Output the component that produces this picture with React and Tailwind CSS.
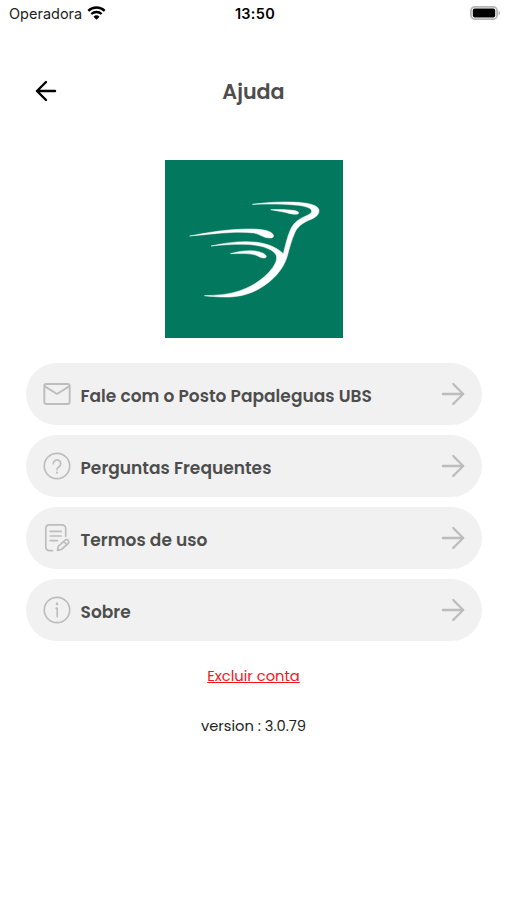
import React from "react";

const StatusBar = () => {
  return (
    <div className="grid h-7 grid-cols-3 items-center pl-[9px] pr-[6px] font-['Inter',sans-serif] text-[#222]">
      <div className="flex items-center">
        <span className="text-[14.5px]">Operadora</span>
        <svg className="mb-[2px] ml-[5px] h-[14px] w-[19px] shrink-0" viewBox="0 0 19 14" fill="none">
          <path d="M1.3 4.8a12 12 0 0 1 16.4 0" stroke="#000" strokeWidth="2.5" />
          <path d="M4.3 8a7.7 7.7 0 0 1 10.4 0" stroke="#000" strokeWidth="2.3" />
          <path d="M9.5 13.8 6.5 10.8a4.3 4.3 0 0 1 6 0Z" fill="#000" />
        </svg>
      </div>
      <span className="text-center text-[14.5px] font-semibold tracking-[0.3px] text-black">
        13:50
      </span>
      <svg className="mb-[2px] h-[14px] w-[31px] justify-self-end" viewBox="0 0 31 14">
        <rect x="0.9" y="0.9" width="26.2" height="12.2" rx="3.8" fill="#fff" stroke="#b5b5b5" strokeWidth="1.8" />
        <rect x="2.8" y="2.6" width="22.4" height="8.8" rx="1.8" fill="#000" />
        <path d="M28.5 5v4c1-.4 1.6-1.1 1.6-2s-.6-1.6-1.6-2Z" fill="#b5b5b5" />
      </svg>
    </div>
  );
};

const Logo = () => {
  return (
    <svg className="h-[178px] w-[178px]" viewBox="15 14 534 534">
      <rect x="15" y="14" width="534" height="534" fill="#02785f" />
      <g fill="#fff" stroke="#fff" strokeWidth="1.5" strokeLinejoin="round">
        <path d="M277 147C320 141 370 138 414 141C451 144 477 151 477 166C477 181 463 188 446 195C426 204 412 215 405 231C394 255 388 281 381 305C370 342 339 376 300 399C262 421 222 427 184 425C165 424 148 423 133 421C169 420 206 418 240 406C284 391 317 365 338 337C353 315 354 300 340 289C319 273 282 267 247 267C214 267 182 269 153 272C190 264 224 259 258 259C303 259 343 269 370 295C376 272 381 247 391 224C399 205 413 193 433 184C445 179 455 174 455 167C455 159 439 153 415 150C370 145 323 146 277 147Z" />
        <path d="M89 242C145 231 206 221 270 221C300 221 326 225 336 234C344 241 342 248 329 248C311 248 302 237 282 233C225 226 153 237 89 242Z" />
        <path d="M211 295C236 288 261 284 285 287C305 290 319 297 319 304C318 310 305 309 295 303C277 292 244 295 211 295Z" />
        <path d="M332 163C354 162 378 162 398 165C413 167 419 171 415 175C409 179 394 176 380 172C364 168 347 166 332 163Z" />
      </g>
    </svg>
  );
};

const MailIcon = () => (
  <svg className="h-7 w-7" viewBox="0 0 28 28" fill="none" stroke="currentColor" strokeWidth="1.9" strokeLinecap="round" strokeLinejoin="round">
    <rect x="1.3" y="4" width="25.4" height="20" rx="2" />
    <path d="m2.3 6.600 11.700 7.400 11.700-7.400" />
  </svg>
);

const QuestionIcon = () => (
  <svg className="h-7 w-7" viewBox="0 0 28 28" fill="none" stroke="currentColor" strokeWidth="1.7" strokeLinecap="round">
    <circle cx="14" cy="14" r="12.7" />
    <path d="M10.300 11.600a3.700 3.700 0 1 1 5.700 3.100c-1.400.9-2 1.400-2 2.900" />
    <circle cx="14" cy="20.600" r="1.100" fill="currentColor" stroke="none" />
  </svg>
);

const TermsIcon = () => (
  <svg className="h-7 w-7" viewBox="0 0 28 28" fill="none" stroke="currentColor" strokeWidth="1.7" strokeLinecap="round" strokeLinejoin="round">
    <path d="M9.5 26.700H6.300a3.500 3.500 0 0 1-3.500-3.500V4.300A3.500 3.500 0 0 1 6.300.900h12.900a3.500 3.500 0 0 1 3.500 3.500v7.900" />
    <path d="M7.300 7.400h10.900M7.300 12h10.900M7.300 16.600h7" />
    <path d="m14.600 26.400.6-4.100 7-6.200a1.900 1.900 0 0 1 2.700.2l.4.500a1.900 1.900 0 0 1-.2 2.700l-6.700 6ZM20.800 17.500l2.900 3.200" />
  </svg>
);

const InfoIcon = () => (
  <svg className="h-7 w-7" viewBox="0 0 28 28" fill="none" stroke="currentColor" strokeWidth="1.7" strokeLinecap="round">
    <circle cx="14" cy="14" r="12.7" />
    <path d="M14.200 12.400v8M13.200 12.200h.8" />
    <circle cx="14" cy="7.900" r="1.300" fill="currentColor" stroke="none" />
  </svg>
);

const options = [
  { label: "Fale com o Posto Papaleguas UBS", icon: MailIcon },
  { label: "Perguntas Frequentes", icon: QuestionIcon },
  { label: "Termos de uso", icon: TermsIcon },
  { label: "Sobre", icon: InfoIcon },
];

const OptionRow = ({ label, icon: Icon }) => {
  return (
    <button className="flex h-[62px] w-full items-center rounded-full bg-[#f1f1f1] pl-[17.5px] pr-[17px] text-[#bdbdbd]">
      <Icon />
      <span className="ml-[9.5px] mt-[5px] whitespace-nowrap text-[17px] font-semibold tracking-[0.03px] text-[#4d4d4d]">
        {label}
      </span>
      <svg className="ml-auto h-6 w-6" viewBox="0 0 24 24" fill="none" stroke="currentColor" strokeWidth="2.4" strokeLinecap="round" strokeLinejoin="round">
        <path d="M2 12h20M12.200 2l10 10-10 10" />
      </svg>
    </button>
  );
};

export default function App() {
  return (
    <div className="flex h-[900px] w-[507px] flex-col overflow-hidden bg-white font-['Poppins','Inter',sans-serif]">
      <StatusBar />
      <header className="mt-[43px] grid h-10 grid-cols-3 items-center px-[35px]">
        <button aria-label="Voltar">
          <svg className="h-[22px] w-[22px]" viewBox="0 0 22 22" fill="none" stroke="#000" strokeWidth="2.4" strokeLinecap="round" strokeLinejoin="round">
            <path d="M20 11H2M11 2l-9 9 9 9" />
          </svg>
        </button>
        <h1 className="mt-[2px] text-center text-[20.7px] font-semibold text-[#4d4d4d]">
          Ajuda
        </h1>
      </header>
      <div className="mt-[49px] flex justify-center">
        <Logo />
      </div>
      <main className="mt-[25px] flex flex-col gap-[10px] pl-[25.5px] pr-[25px]">
        {options.map((option) => (
          <OptionRow key={option.label} {...option} />
        ))}
      </main>
      <footer className="mt-[23px] flex flex-col items-center">
        <a className="text-[14.7px] leading-6 text-[#f5141c] underline" href="#">
          Excluir conta
        </a>
        <p className="mt-[26px] text-[14.7px] leading-6 text-[#222]">
          version : 3.0.79
        </p>
      </footer>
    </div>
  );
}
